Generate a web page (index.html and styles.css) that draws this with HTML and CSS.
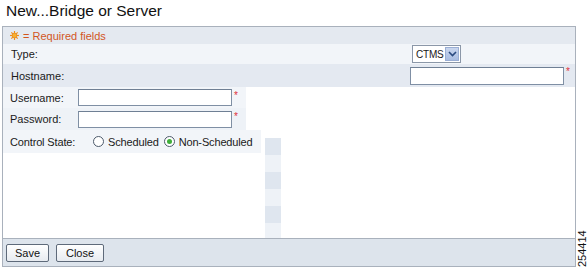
FILE: index.html
```html
<!DOCTYPE html>
<html>
<head>
<meta charset="utf-8">
<link rel="stylesheet" href="styles.css">
</head>
<body>
<div class="page">
  <h1 class="title">New...Bridge or Server</h1>
  <div class="panel">
    <div class="req">
      <svg class="sun" width="9" height="9" viewBox="0 0 9 9">
        <g stroke="#f0901e" stroke-width="1.2">
          <line x1="4.5" y1="0" x2="4.5" y2="9"/>
          <line x1="0" y1="4.5" x2="9" y2="4.5"/>
          <line x1="1.3" y1="1.3" x2="7.7" y2="7.7"/>
          <line x1="7.7" y1="1.3" x2="1.3" y2="7.7"/>
        </g>
        <circle cx="4.5" cy="4.5" r="2.4" fill="#f7b030" stroke="#e07a10" stroke-width="0.6"/>
      </svg>
      <span>= Required fields</span>
    </div>
    <div class="row row-type">
      <span class="label">Type:</span>
      <span class="select"><span class="sel-text">CTMS</span><span class="sel-btn"><svg width="9" height="6" viewBox="0 0 9 6"><path d="M1 1 L4.5 4.5 L8 1" fill="none" stroke="#2a4a80" stroke-width="1.6"/></svg></span></span>
    </div>
    <div class="row row-host">
      <span class="label">Hostname:</span>
      <span class="host-field"><span class="input input-host"></span><span class="star">*</span></span>
    </div>
    <div class="lower">
      <div class="fields">
        <div class="frow frow-user">
          <span class="flabel">Username:</span>
          <span class="input input-small"></span><span class="star">*</span>
        </div>
        <div class="frow frow-pass">
          <span class="flabel">Password:</span>
          <span class="input input-small"></span><span class="star">*</span>
        </div>
        <div class="frow frow-ctrl">
          <span class="flabel flabel-ctrl">Control State:</span>
          <span class="radio"></span><span class="rtext">Scheduled</span>
          <span class="radio radio-on"><span class="dot"></span></span><span class="rtext">Non-Scheduled</span>
        </div>
      </div>
      <div class="stripes"></div>
    </div>
    <div class="footer">
      <button class="btn btn-save">Save</button>
      <button class="btn btn-close">Close</button>
    </div>
  </div>
  <div class="figno">254414</div>
</div>
</body>
</html>
```

FILE: styles.css
```css
* { box-sizing: border-box; }
html, body { margin: 0; padding: 0; background: #fff; }
body {
  font-family: "Liberation Sans", Arial, sans-serif;
  font-size: 11px;
  color: #1a1a1a;
  width: 588px;
  height: 269px;
  overflow: hidden;
}
.page { position: relative; width: 588px; height: 269px; }
.title {
  margin: 0;
  height: 26px;
  padding: 1px 0 0 6px;
  font-size: 15.5px;
  font-weight: normal;
  line-height: 20px;
  color: #111;
}
.panel {
  margin-left: 2px;
  width: 574px;
  height: 241px;
  border: 1px solid #a9b1bc;
  display: flex;
  flex-direction: column;
}
.req {
  height: 17px;
  background: #e4e9f0;
  display: flex;
  align-items: center;
  padding-left: 7px;
  color: #d2561e;
  font-size: 11px;
}
.sun { margin-right: 4px; margin-top: -1px; }
.row {
  display: flex;
  align-items: center;
  padding-left: 8px;
}
.row .label { width: 398px; }
.row-type { height: 20px; background: #f2f5f9; }
.row-host { height: 23px; background: #e4e9f1; }
.select {
  margin-left: 3px;
  width: 49px;
  height: 18px;
  border: 1px solid #8b97a8;
  background: #fff;
  display: flex;
  align-items: center;
  justify-content: space-between;
  padding: 1px;
  overflow: hidden;
}
.sel-text { padding-left: 2px; font-size: 10px; letter-spacing: -0.2px; }
.sel-btn {
  flex: none;
  width: 14px;
  height: 14px;
  background: linear-gradient(#c9d6ee, #a9bde2);
  border: 1px solid #9aaed4;
  display: flex;
  align-items: center;
  justify-content: center;
}
.host-field { display: flex; align-items: flex-start; margin-left: 1px; }
.input {
  display: block;
  height: 18px;
  background: #fff;
  border: 1px solid #7f8fa4;
  border-top-color: #6f7f94;
}
.input-host { width: 154px; }
.star { color: #e0303a; font-size: 10px; line-height: 10px; margin-left: 2px; }
.lower {
  flex: 1;
  display: flex;
  align-items: stretch;
}
.fields { display: flex; flex-direction: column; align-items: flex-start; }
.frow {
  display: flex;
  align-items: center;
  padding-left: 7px;
  padding-right: 8px;
}
.frow-user { height: 21px; background: #f2f5f9; }
.frow-pass { height: 22px; background: #eef2f7; }
.frow-ctrl { height: 23px; background: #f2f5f9; padding-right: 8px; letter-spacing: -0.15px; }
.frow .star { align-self: flex-start; margin-top: 4px; }
.flabel { width: 68px; }
.flabel-ctrl { width: 83px; }
.input-small { width: 154px; height: 17px; }
.radio {
  flex: none;
  width: 11px;
  height: 11px;
  border: 1px solid #4d5a6b;
  border-radius: 50%;
  background: #fff;
  display: inline-flex;
  align-items: center;
  justify-content: center;
  margin-right: 4px;
}
.radio-on { margin-left: 5px; }
.dot { width: 5px; height: 5px; border-radius: 50%; background: #3fae3a; }
.rtext { font-size: 11px; }
.stripes {
  margin-left: 4px;
  margin-top: 51px;
  width: 16px;
  background: repeating-linear-gradient(#dfe6ef 0, #dfe6ef 17px, #eef2f7 17px, #eef2f7 34px);
}
.footer {
  height: 28px;
  border-top: 1px solid #a9b1bc;
  background: #dde4ec;
  display: flex;
  align-items: center;
  padding-left: 3px;
  gap: 7px;
}
.btn {
  font-family: "Liberation Sans", Arial, sans-serif;
  font-size: 11px;
  color: #111;
  height: 18px;
  padding: 0;
  border: 1px solid #5e6a7a;
  border-radius: 2px;
  background: linear-gradient(#ffffff, #e7ebf0);
  margin-top: 1px;
}
.btn-save { width: 43px; }
.btn-close { width: 48px; }
.figno {
  position: absolute;
  left: 577px;
  top: 225px;
  width: 11px;
  height: 42px;
  writing-mode: vertical-rl;
  transform: rotate(180deg);
  font-size: 11px;
  line-height: 11px;
  color: #111;
}
```
